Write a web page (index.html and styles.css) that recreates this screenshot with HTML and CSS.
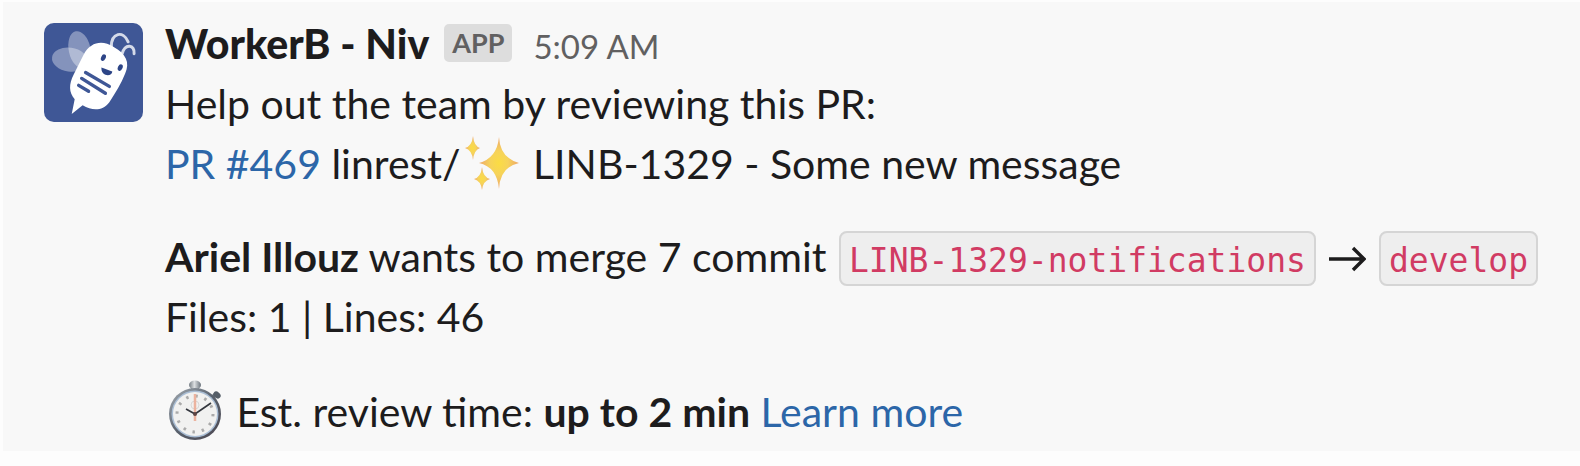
FILE: index.html
```
<!DOCTYPE html>
<html lang="en">
<head>
    <meta charset="UTF-8">
    <meta name="viewport" content="width=device-width, initial-scale=1.0">
    <title>WorkerB - Niv</title>
    <link rel="stylesheet" href="styles.css">
</head>
<body>
    <article class="message">
        <svg class="avatar" viewBox="0 0 100 100" role="img" aria-label="WorkerB">
            <rect width="100" height="100" rx="10" fill="#3f5796"/>
            <!-- wings -->
            <ellipse cx="36" cy="27" rx="11" ry="19" transform="rotate(-12 36 27)" fill="#fff" fill-opacity=".36"/>
            <ellipse cx="26" cy="37" rx="18" ry="12" transform="rotate(8 26 37)" fill="#fff" fill-opacity=".36"/>
            <!-- antennae -->
            <path d="M68 24C68 10 80 7 85 19M79 31C82 20 92 22 91 31" fill="none" stroke="#d4dae9" stroke-width="3" stroke-linecap="round"/>
            <!-- body -->
            <path d="M40 32C47 19 59 17 70 24C83 31 87 40 82 51C78 61 72 71 66 80C59 89 49 89 39 83L28 92L31 77C25 70 25 62 30 52Z" fill="#fff"/>
            <!-- face -->
            <ellipse cx="60" cy="35" rx="2.3" ry="3.5" transform="rotate(25 60 35)" fill="#2d4587"/>
            <ellipse cx="77" cy="45" rx="2.3" ry="3.5" transform="rotate(25 77 45)" fill="#2d4587"/>
            <path d="M58 45C62 46 65 48 69 49C69 53 63 54 60 51C58 49 58 47 58 45Z" fill="#2d4587"/>
            <path d="M42 50L66 64M38 56L62 71M35 63L45 69" stroke="#3f5796" stroke-width="3.4" stroke-linecap="round"/>
        </svg>

        <div class="content">
            <header class="sender">
                <strong class="name">WorkerB - Niv</strong>
                <span class="app-badge">APP</span>
                <time class="time" datetime="05:09">5:09 AM</time>
            </header>

            <p>Help out the team by reviewing this PR:</p>
            <p><a href="#">PR #469</a> linrest/<svg class="sparkles" viewBox="0 0 56 56" role="img" aria-label="sparkles">
                <defs>
                    <radialGradient id="gold">
                        <stop offset="0" stop-color="#fbdc43"/>
                        <stop offset=".45" stop-color="#f6d35a"/>
                        <stop offset="1" stop-color="#eda66a"/>
                    </radialGradient>
                </defs>
                <g fill="url(#gold)">
                    <path d="M34 2Q35 23 54 28Q35 32 34 54Q32 32 14 28Q32 23 34 2Z"/>
                    <path d="M8 1Q9 11 15 13Q9 15 8 25Q7 15 0 13Q7 11 8 1Z"/>
                    <path d="M17 32Q18 42 25 44Q18 46 17 55Q16 46 9 44Q16 42 17 32Z"/>
                </g>
            </svg> LINB-1329 - Some new message</p>

            <p class="section"><strong>Ariel Illouz</strong> wants to merge 7 commit <code>LINB-1329-notifications</code> <svg class="arrow" viewBox="0 0 38 26" role="img" aria-label="to"><path d="M1 13H35M25 2L36 13L25 24" fill="none" stroke="#1d1c1d" stroke-width="3.4"/></svg> <code>develop</code></p>
            <p>Files: 1 | Lines: 46</p>

            <p class="section"><svg class="stopwatch" viewBox="0 0 54 60" role="img" aria-label="stopwatch">
                <defs>
                    <linearGradient id="steel" x2="1" y2="1">
                        <stop offset="0" stop-color="#a5adb4"/>
                        <stop offset=".5" stop-color="#59616d"/>
                        <stop offset="1" stop-color="#4c4750"/>
                    </linearGradient>
                    <linearGradient id="knob">
                        <stop offset="0" stop-color="#737b82"/>
                        <stop offset=".45" stop-color="#dde0e2"/>
                        <stop offset="1" stop-color="#68717a"/>
                    </linearGradient>
                </defs>
                <path d="M23 6H31V13H23Z" fill="#7e878e"/>
                <ellipse cx="27" cy="5" rx="6" ry="4.5" fill="url(#knob)"/>
                <path d="M42 20L48 14" stroke="#6c747c" stroke-width="4"/>
                <ellipse cx="49" cy="15" rx="4" ry="3" transform="rotate(40 49 15)" fill="#555e68"/>
                <circle cx="27" cy="34" r="26" fill="url(#steel)"/>
                <circle cx="27" cy="34" r="23.5" fill="#a9bdd4"/>
                <circle cx="27" cy="34" r="22" fill="#f1f1f0"/>
                <circle cx="27" cy="34" r="18" fill="none" stroke="#aaa" stroke-width="3" stroke-dasharray="2.5 6.9"/>
                <circle cx="27" cy="25" r="4" fill="none" stroke="#d8d8d8"/>
                <path d="M27 14V41" stroke="#ecb39f" stroke-width="2.5"/>
                <path d="M18 29L27 34L43 23" fill="none" stroke="#34373e" stroke-width="1.7"/>
                <circle cx="27" cy="34" r="2" fill="#5d4544"/>
            </svg> Est. review time: <strong>up to 2 min</strong> <a href="#">Learn more</a></p>
        </div>
    </article>
</body>
</html>
```
FILE: styles.css
```
* {
    box-sizing: border-box;
}

body {
    margin: 0;
    padding: 2px 0 0 3px;
    background-color: #fdfdfd;
    color: #1d1c1d;
    font-family: Lato, "Liberation Sans", sans-serif;
    font-size: 41px;
    line-height: 60px;
}

.message {
    display: flex;
    gap: 22px;
    padding: 12px 20px 9px 41px;
    background-color: #f8f8f8;
}

.avatar {
    flex: none;
    width: 99px;
    height: 99px;
    margin-top: 9px;
}

.content {
    flex: 1;
    min-width: 0;
}

.sender {
    display: flex;
    align-items: baseline;
    height: 60px;
}

.name {
    font-weight: 900;
}

.app-badge {
    align-self: center;
    margin: 0 21px 2px 15px;
    padding: 0 8px;
    border-radius: 5px;
    background-color: #dddddd;
    color: #616061;
    font-size: 27px;
    font-weight: bold;
    line-height: 38px;
}

.time {
    color: #616061;
    font-size: 33px;
}

p {
    margin: 0;
}

.section {
    margin-top: 33px;
}

a {
    color: #2c66a8;
    text-decoration: none;
}

a:hover {
    text-decoration: underline;
}

code {
    margin: 0 2px;
    padding: 8px 8px 4px;
    border: 2px solid #d5d5d5;
    border-radius: 8px;
    background-color: #eeeeee;
    color: #d13b63;
    font-family: "DejaVu Sans Mono", monospace;
    font-size: 33px;
    line-height: 38px;
}

.sparkles {
    width: 56px;
    height: 56px;
    margin: 0 2px 0 4px;
    vertical-align: -12px;
}

.arrow {
    width: 38px;
    height: 26px;
}

.stopwatch {
    width: 54px;
    height: 60px;
    margin: 0 4px 0 3px;
    vertical-align: -13px;
}
```
